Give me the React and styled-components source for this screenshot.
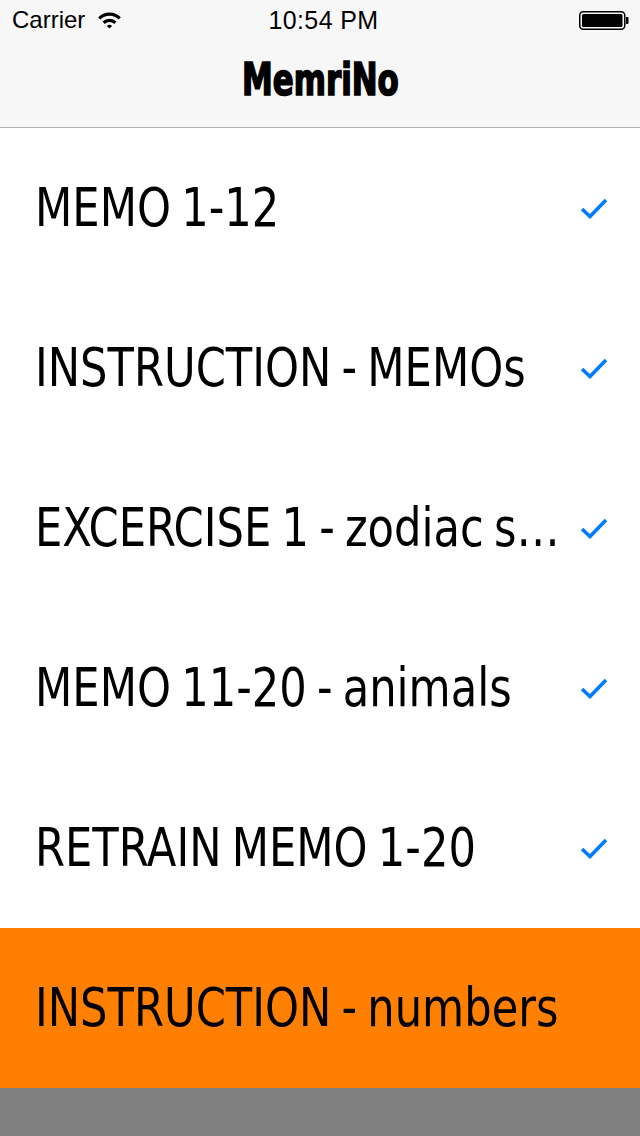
import React from 'react'
import styled, { createGlobalStyle } from 'styled-components'

const GlobalStyle = createGlobalStyle`
	html, body {
		margin: 0;
		padding: 0;
		background: #808080;
	}
	* {
		box-sizing: border-box;
	}
`

const Screen = styled.div`
	width: 640px;
	min-height: 100vh;
	display: flex;
	flex-direction: column;
	background: #808080;
`

const Header = styled.header`
	background: #f7f7f7;
	border-bottom: 1px solid #b2b2b2;
`

const StatusBar = styled.div`
	height: 40px;
	display: grid;
	grid-template-columns: 1fr auto 1fr;
	align-items: center;
	padding: 0 11px 0 12px;
	font-family: "Liberation Sans", Arial, sans-serif;
	font-size: 24px;
	color: #000;
`

const StatusLeft = styled.div`
	display: flex;
	align-items: center;
	gap: 12px;
`

const Clock = styled.div`
	font-weight: 500;
	font-size: 25px;
	letter-spacing: 0.4px;
	padding-left: 6px;
`

const StatusRight = styled.div`
	display: flex;
	justify-content: flex-end;
	align-items: center;
`

const NavBar = styled.div`
	height: 87px;
	display: flex;
	align-items: center;
	justify-content: center;
	padding-bottom: 8px;
`

const Title = styled.h1`
	margin: 0;
	font-family: "DejaVu Sans", sans-serif;
	font-stretch: condensed;
	font-weight: 700;
	font-size: 44px;
	color: #000;
	-webkit-text-stroke: 1.6px #000;
	transform: scaleX(0.78);
`

const List = styled.ul`
	margin: 0;
	padding: 0;
	list-style: none;
`

const Row = styled.li`
	height: 160px;
	display: flex;
	align-items: center;
	padding: 0 32px 0 35px;
	background: ${props => (props.active ? '#ff8000' : '#fff')};
`

const LabelBox = styled.div`
	flex: 1;
	min-width: 0;
	margin-right: 14px;
`

const Label = styled.span`
	display: block;
	width: calc(100% / 0.89);
	transform: scaleX(0.89);
	transform-origin: left center;
	white-space: nowrap;
	overflow: hidden;
	text-overflow: ellipsis;
	font-family: "DejaVu Sans", sans-serif;
	font-stretch: condensed;
	font-size: 54px;
	line-height: 1.2;
	word-spacing: -4px;
	color: #000;
`

const Check = styled.svg`
	width: 28px;
	height: 22px;
	flex-shrink: 0;
`

const Filler = styled.div`
	flex: 1;
	background: #808080;
`

const items = [
	{ title: 'MEMO 1-12', done: true },
	{ title: 'INSTRUCTION - MEMOs', done: true },
	{ title: 'EXCERCISE 1 - zodiac signs', done: true },
	{ title: 'MEMO 11-20 - animals', done: true },
	{ title: 'RETRAIN MEMO 1-20', done: true },
	{ title: 'INSTRUCTION - numbers', active: true }
]

const Wifi = () => (
	<svg width="25" height="18" viewBox="0 0 26 19">
		<path d="M1 6.5 A17 17 0 0 1 25 6.5 L22.6 9 A13.6 13.6 0 0 0 3.4 9 Z" fill="#000" />
		<path d="M5.6 11.2 A10.5 10.5 0 0 1 20.4 11.2 L18 13.6 A7.2 7.2 0 0 0 8 13.6 Z" fill="#000" />
		<path d="M10.2 15.8 A4 4 0 0 1 15.8 15.8 L13 18.6 Z" fill="#000" />
	</svg>
)

const Battery = () => (
	<svg width="50" height="19" viewBox="0 0 50 19">
		<rect x="0.75" y="0.75" width="45" height="17.5" rx="3.5" fill="none" stroke="#000" strokeWidth="1.5" />
		<rect x="3" y="3" width="40.5" height="13" rx="1.5" fill="#000" />
		<path d="M47 6 h1.5 a1 1 0 0 1 1 1 v5 a1 1 0 0 1 -1 1 h-1.5 Z" fill="#000" />
	</svg>
)

const App = () => {
	return (
		<Screen>
			<GlobalStyle />
			<Header>
				<StatusBar>
					<StatusLeft>
						Carrier
						<Wifi />
					</StatusLeft>
					<Clock>10:54 PM</Clock>
					<StatusRight>
						<Battery />
					</StatusRight>
				</StatusBar>
				<NavBar>
					<Title>MemriNo</Title>
				</NavBar>
			</Header>
			<List>
				{items.map(item => (
					<Row key={item.title} active={item.active}>
						<LabelBox>
							<Label>{item.title}</Label>
						</LabelBox>
						{item.done && (
							<Check viewBox="0 0 28 22">
								<path d="M2 12 L10 19.5 L26 3" fill="none" stroke="#007aff" strokeWidth="3.6" />
							</Check>
						)}
					</Row>
				))}
			</List>
			<Filler />
		</Screen>
	)
}

export default App
